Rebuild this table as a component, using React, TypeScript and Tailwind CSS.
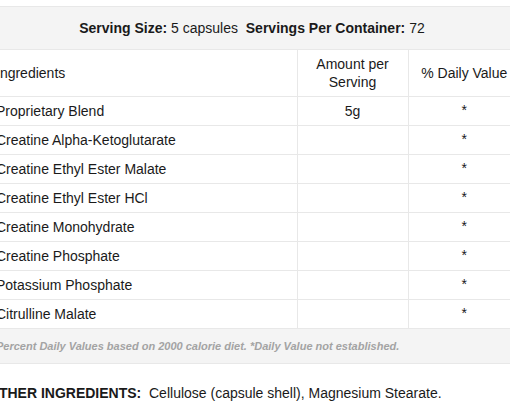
import React from "react";

const rows: [string, string][] = [
  ["Proprietary Blend", "5g"],
  ["Creatine Alpha-Ketoglutarate", ""],
  ["Creatine Ethyl Ester Malate", ""],
  ["Creatine Ethyl Ester HCl", ""],
  ["Creatine Monohydrate", ""],
  ["Creatine Phosphate", ""],
  ["Potassium Phosphate", ""],
  ["Citrulline Malate", ""],
];

export default function App() {
  return (
    <div className="w-[510px] h-[416px] overflow-hidden bg-white text-[#1a1a1a] font-['Liberation_Sans',Arial,sans-serif]">
      <div className="ml-[-16px] w-[536px] pt-[6px]">
        <div className="h-[43px] border-t border-[#e8e8e8] bg-[#f4f4f4] flex items-center justify-center text-[14px]">
          <span>
            <b>Serving Size:</b> 5 capsules&nbsp;&nbsp;<b>Servings Per Container:</b> 72
          </span>
        </div>
        <table className="w-[536px] border-collapse table-fixed text-[14px]">
          <colgroup>
            <col className="w-[313px]" />
            <col className="w-[111px]" />
            <col className="w-[112px]" />
          </colgroup>
          <thead>
            <tr className="h-[47px] border-t border-[#e8e8e8]">
              <th className="font-normal text-left pl-[12px] border-r border-[#e8e8e8]">Ingredients</th>
              <th className="font-normal text-center leading-[18px] border-r border-[#e8e8e8]">
                Amount per
                <br />
                Serving
              </th>
              <th className="font-normal text-center">% Daily Value</th>
            </tr>
          </thead>
          <tbody>
            {rows.map(([name, amt]) => (
              <tr key={name} className="h-[29px] border-t border-[#e8e8e8]">
                <td className="pl-[12px] border-r border-[#e8e8e8]">{name}</td>
                <td className="text-center border-r border-[#e8e8e8]">{amt}</td>
                <td className="text-center align-top pt-[3px]">*</td>
              </tr>
            ))}
            <tr className="h-[35px] border-y border-[#e8e8e8] bg-[#f4f4f4]">
              <td colSpan={3} className="pl-[12px] text-[11px] italic font-bold text-[#a3a3a3]">
                Percent Daily Values based on 2000 calorie diet. *Daily Value not established.
              </td>
            </tr>
          </tbody>
        </table>
      </div>
      <div className="ml-[-12px] mt-[19px] text-[14px]">
        <b>OTHER INGREDIENTS:</b>&nbsp;&nbsp;Cellulose (capsule shell), Magnesium Stearate.
      </div>
    </div>
  );
}
